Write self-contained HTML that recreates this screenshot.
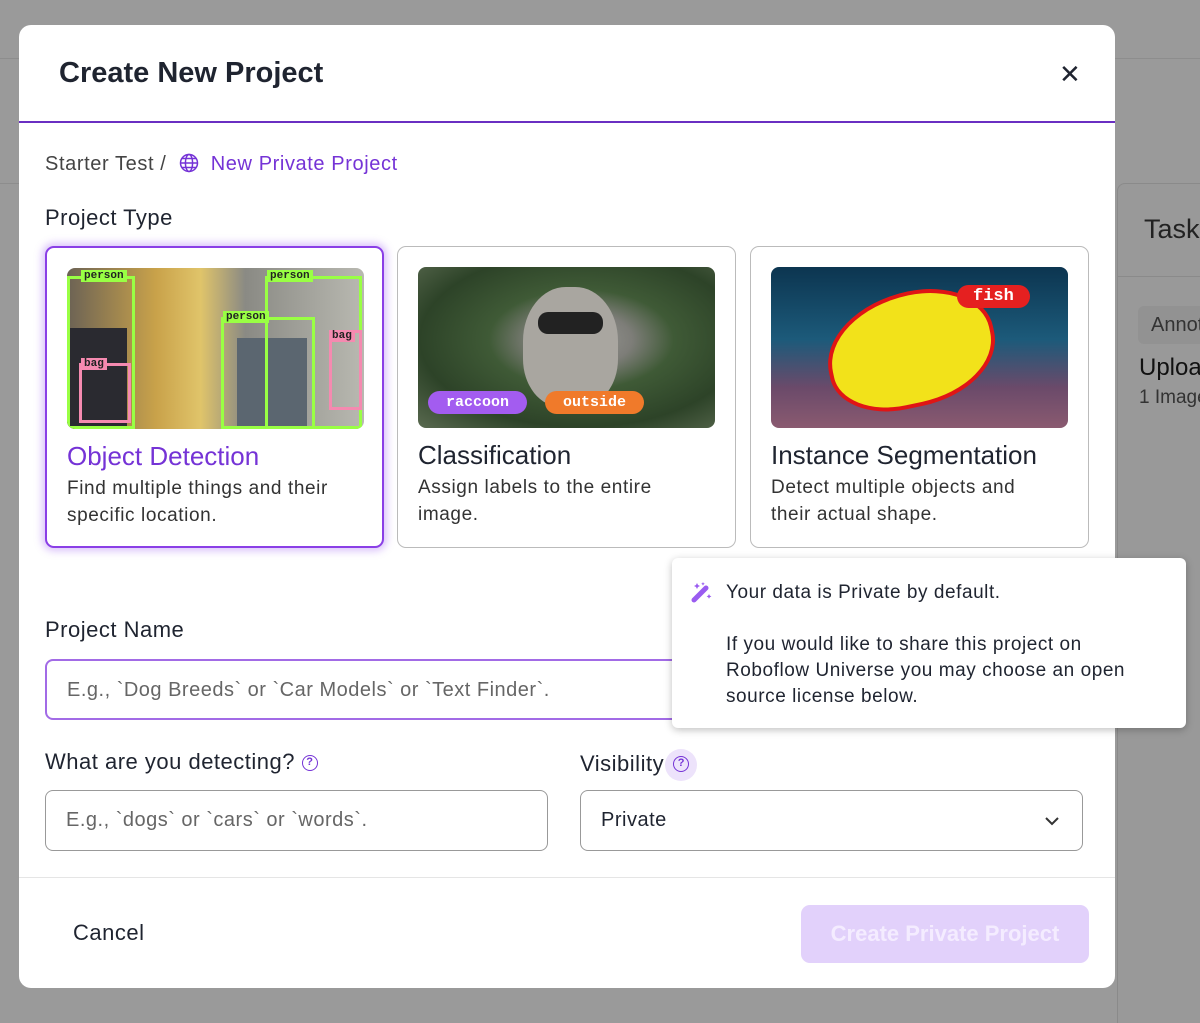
<!DOCTYPE html>
<html><head><meta charset="utf-8"><style>
*{box-sizing:border-box;margin:0;padding:0}
body{width:1200px;height:1015px;background:#9a9a9a;font-family:"Liberation Sans",sans-serif;position:relative;overflow:hidden;color:#1f2430}
.bgline{position:absolute;left:0;right:0;height:1px;background:#8d8d8d}
.side{position:absolute;left:1117px;top:183px;width:100px;height:840px;background:#999;border-left:1px solid #8a8a8a;border-top:1px solid #8a8a8a;border-radius:8px 0 0 0}
.modal{position:absolute;left:19px;top:25px;width:1096px;height:963px;background:#fff;border-radius:12px;overflow:hidden}
.hd{height:98px;border-bottom:2px solid #6a2fc2;position:relative}
.hd h1{position:absolute;left:40px;top:32px;font-size:29px;font-weight:700;color:#1f2430;letter-spacing:0px}
.x{position:absolute;left:1040px;top:34px;font-size:26px;color:#1f2430}
.crumb{position:absolute;left:26px;top:128px;font-size:20px;color:#444;letter-spacing:.6px}
.crumb span{color:#7533d6}
.lbl{position:absolute;font-size:22px;color:#1f2430;letter-spacing:.5px}
.card{position:absolute;top:221px;width:339px;height:302px;border:1.5px solid #bbb;border-radius:9px;background:#fff}
.card.sel{border:2.5px solid #8a3fe6;box-shadow:0 0 8px 3px rgba(150,80,240,.35)}
.img{position:absolute;left:20px;top:20px;width:297px;height:161px;border-radius:8px;overflow:hidden}
.card h3{position:absolute;left:20px;top:193px;font-size:26px;font-weight:400;color:#1f2430;letter-spacing:0}
.card p{position:absolute;left:20px;top:227px;font-size:19px;line-height:27px;color:#333;width:285px;letter-spacing:.6px}
.tag{position:absolute;font-family:"Liberation Mono",monospace;font-size:15px;font-weight:700;color:#fff;padding:3px 18px;border-radius:14px}
.inp{position:absolute;height:61px;border:1.5px solid #999;border-radius:8px;font-size:20px;color:#666;padding:18px 20px;letter-spacing:.5px}
.ft{position:absolute;left:0;right:0;top:852px;height:1px;background:#e5e5e5}
.tip{position:absolute;left:672px;top:558px;width:514px;height:170px;background:#fff;border-radius:6px;box-shadow:0 2px 8px rgba(0,0,0,.25);font-size:19px;line-height:26px;color:#1f2430;padding:22px 0 0 54px;letter-spacing:.55px}
.q{display:inline-block;width:16px;height:16px;border:1.5px solid #7533d6;border-radius:50%;font-size:11px;color:#7533d6;text-align:center;line-height:13px;font-weight:700;vertical-align:middle;letter-spacing:0}
.box{position:absolute;border:3px solid #9f4;}
.bl{position:absolute;background:#9f4;font-family:"Liberation Mono",monospace;font-size:11px;font-weight:700;color:#222;padding:0 3px}
</style></head><body>
<div class="bgline" style="top:58px"></div>
<div class="bgline" style="top:183px;width:20px"></div>
<div class="side">
<div style="position:absolute;left:26px;top:30px;font-size:27px;color:#222">Task</div>
<div style="position:absolute;left:0;top:92px;width:100px;height:1px;background:#8a8a8a"></div>
<div style="position:absolute;left:20px;top:122px;width:90px;height:38px;background:#929292;border-radius:6px;font-size:20px;padding:8px 13px;color:#333">Annot</div>
<div style="position:absolute;left:21px;top:170px;font-size:24px;color:#111">Uploa</div>
<div style="position:absolute;left:21px;top:203px;font-size:19px;color:#333">1 Image</div>
</div>
<div class="modal">
<div class="hd"><h1>Create New Project</h1><div class="x">✕</div></div>
<div class="crumb">Starter Test / <span><svg width="20" height="20" viewBox="0 0 20 20" style="vertical-align:-3px;margin:0 6px"><g fill="none" stroke="#7533d6" stroke-width="1.5"><circle cx="10" cy="10" r="8.5"/><ellipse cx="10" cy="10" rx="3.6" ry="8.5"/><path d="M1.5 10h17M3 5.5h14M3 14.5h14"/></g></svg> New Private Project</span></div>
<div class="lbl" style="left:26px;top:180px">Project Type</div>

<div class="card sel" style="left:26px">
<div class="img" style="background:linear-gradient(90deg,#6b6255 0%,#c9a24a 30%,#e0c46a 45%,#8a8a84 60%,#b9b9b1 100%)">
<div style="position:absolute;left:0;top:60px;width:60px;height:101px;background:#2a2a30"></div>
<div style="position:absolute;left:170px;top:70px;width:70px;height:91px;background:#5b6670"></div>
<div class="box" style="left:0;top:8px;width:68px;height:153px"></div><div class="bl" style="left:14px;top:2px">person</div>
<div class="box" style="left:198px;top:8px;width:97px;height:153px"></div><div class="bl" style="left:200px;top:2px">person</div>
<div class="box" style="left:154px;top:49px;width:94px;height:112px"></div><div class="bl" style="left:156px;top:43px">person</div>
<div class="box" style="left:12px;top:95px;width:52px;height:60px;border-color:#f58ab0"></div><div class="bl" style="left:14px;top:90px;background:#f58ab0">bag</div>
<div class="box" style="left:262px;top:62px;width:33px;height:80px;border-color:#f58ab0"></div><div class="bl" style="left:262px;top:62px;background:#f58ab0">bag</div>
</div>
<h3 style="color:#7533d6">Object Detection</h3>
<p>Find multiple things and their specific location.</p>
</div>

<div class="card" style="left:378px">
<div class="img" style="background:radial-gradient(ellipse at 55% 45%,#9a9a96 0%,#7d7d78 22%,#3f5a36 40%,#2d4328 70%,#5a6a50 100%)">
<div style="position:absolute;left:105px;top:20px;width:95px;height:120px;border-radius:45% 45% 40% 40%;background:#a9a6a0"></div>
<div style="position:absolute;left:120px;top:45px;width:65px;height:22px;background:#222;border-radius:10px"></div>
<span class="tag" style="left:10px;top:124px;background:#a35cf0">raccoon</span>
<span class="tag" style="left:127px;top:124px;background:#f07a2a">outside</span>
</div>
<h3>Classification</h3>
<p>Assign labels to the entire image.</p>
</div>

<div class="card" style="left:731px">
<div class="img" style="background:linear-gradient(180deg,#0c3550 0%,#1c5a7a 45%,#6b4a6a 75%,#8a5a70 100%)">
<div style="position:absolute;left:55px;top:25px;width:170px;height:115px;background:#f2e21a;border:4px solid #e01515;border-radius:55% 45% 50% 40%;transform:rotate(-12deg)"></div>
<span class="tag" style="left:186px;top:18px;background:#e52020;font-size:17px;padding:2px 16px">fish</span>
</div>
<h3>Instance Segmentation</h3>
<p>Detect multiple objects and their actual shape.</p>
</div>

<div class="lbl" style="left:26px;top:592px">Project Name</div>
<div class="inp" style="left:26px;top:634px;width:1037px;border:2px solid #a26be6">E.g., `Dog Breeds` or `Car Models` or `Text Finder`.</div>
<div class="lbl" style="left:26px;top:724px">What are you detecting? <span class="q">?</span></div>
<div class="lbl" style="left:561px;top:724px">Visibility<span style="display:inline-block;width:32px;height:32px;border-radius:50%;background:#ede3fb;vertical-align:middle;text-align:center;padding-top:7px;margin-left:1px"><span class="q" style="vertical-align:top">?</span></span></div>
<div class="inp" style="left:26px;top:765px;width:503px">E.g., `dogs` or `cars` or `words`.</div>
<div class="inp" style="left:561px;top:765px;width:503px;color:#1f2430">Private
<svg width="16" height="10" viewBox="0 0 16 10" style="position:absolute;right:22px;top:25px"><path d="M2 2l6 6 6-6" fill="none" stroke="#333" stroke-width="2"/></svg></div>
<div class="ft"></div>
<div style="position:absolute;left:54px;top:895px;font-size:22px;color:#1f2430;letter-spacing:.5px">Cancel</div>
<div style="position:absolute;left:782px;top:880px;width:288px;height:58px;border-radius:9px;background:#e2d1fb;color:#f4ecff;font-size:22px;text-align:center;line-height:58px;font-weight:700">Create Private Project</div>
</div>

<div class="tip">
<svg width="24" height="24" viewBox="0 0 24 24" style="position:absolute;left:18px;top:22px"><path d="M4 20L16 8" stroke="#9a5cf0" stroke-width="5" stroke-linecap="round"/><path d="M7 3l1 2 2 1-2 1-1 2-1-2-2-1 2-1zM19 14l.8 1.6 1.6.8-1.6.8-.8 1.6-.8-1.6-1.6-.8 1.6-.8zM13 2l.6 1.2 1.2.6-1.2.6L13 5.6l-.6-1.2-1.2-.6 1.2-.6z" fill="#9a5cf0"/></svg>
Your data is Private by default.<br><br>If you would like to share this project on<br>Roboflow Universe you may choose an open<br>source license below.
</div>
</body></html>
